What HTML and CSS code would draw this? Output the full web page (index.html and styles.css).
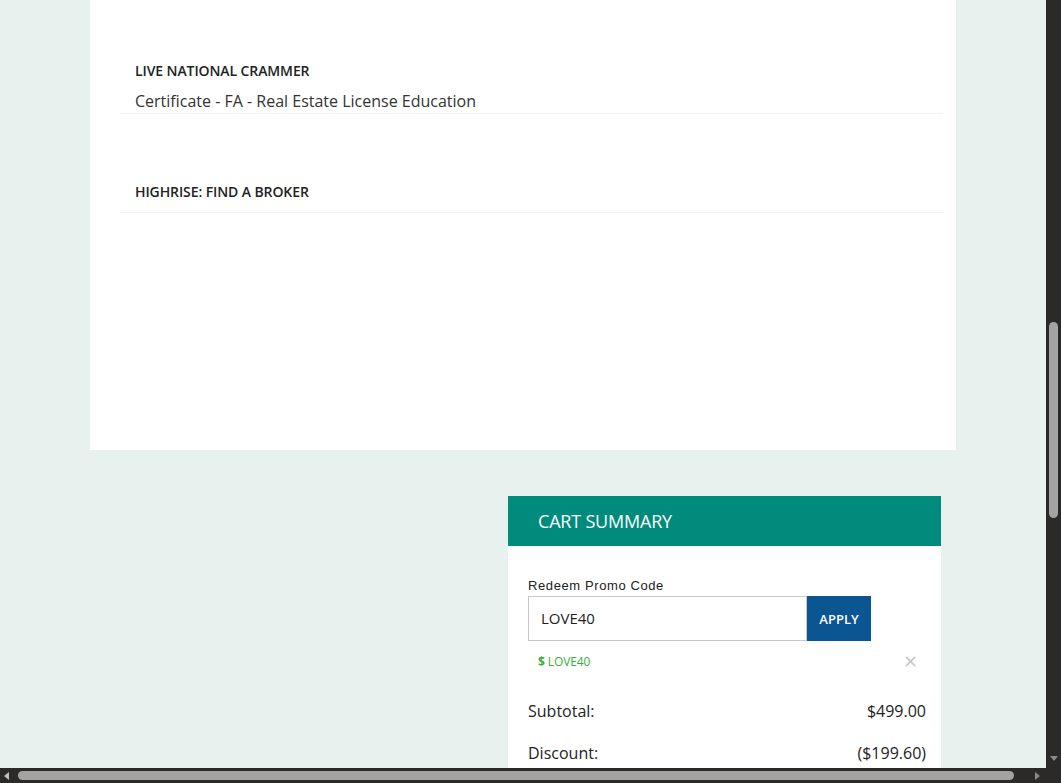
FILE: index.html
```html
<!DOCTYPE html>
<html>
<head>
<meta charset="utf-8">
<link rel="stylesheet" href="styles.css">
</head>
<body>
<div class="viewport">
  <div class="page">
    <section class="panel">
      <div class="item item-first">
        <div class="item-title">LIVE NATIONAL CRAMMER</div>
        <div class="item-sub">Certificate - FA - Real Estate License Education</div>
      </div>
      <div class="item item-second">
        <div class="item-title">HIGHRISE: FIND A BROKER</div>
      </div>
    </section>
    <div class="cart-row">
      <section class="cart">
        <div class="cart-head">CART SUMMARY</div>
        <div class="cart-body">
          <label class="promo-label">Redeem Promo Code</label>
          <div class="promo-row">
            <div class="promo-input">LOVE40</div>
            <button class="promo-btn">APPLY</button>
          </div>
          <div class="applied">
            <span class="applied-code">$ LOVE40</span>
            <span class="applied-x">×</span>
          </div>
          <div class="line line-first"><span>Subtotal:</span><span>$499.00</span></div>
          <div class="line"><span>Discount:</span><span>($199.60)</span></div>
        </div>
      </section>
    </div>
  </div>
  <div class="vscroll">
    <div class="vthumb"></div>
    <div class="varrow"></div>
  </div>
  <div class="hscroll">
    <div class="harrow-l"></div>
    <div class="hthumb"></div>
    <div class="harrow-r"></div>
  </div>
  <div class="corner"></div>
</div>
</body>
</html>
```
FILE: styles.css
```css
html, body {
  margin: 0;
  padding: 0;
  width: 1061px;
  height: 783px;
  overflow: hidden;
  background: #e7f1ed;
}
.viewport {
  width: 1061px;
  height: 783px;
  overflow: hidden;
  position: relative;
}
.page {
  width: 1046px;
  height: 768px;
  overflow: hidden;
  font-family: "Open Sans", "Noto Sans", sans-serif;
}
.panel {
  margin-left: 90px;
  width: 866px;
  height: 450px;
  background: #fff;
  padding: 0 13px 0 30px;
  box-sizing: border-box;
}
.item {
  border-bottom: 1px solid #f0f2f1;
  padding-left: 15px;
}
.item-first {
  padding-top: 62px;
  height: 51px;
}
.item-second {
  padding-top: 69px;
  height: 29px;
}
.item-title {
  font-size: 14px;
  font-weight: 600;
  color: #222;
  line-height: 18px;
  letter-spacing: -0.1px;
}
.item-sub {
  font-size: 16px;
  color: #333;
  line-height: 22px;
  margin-top: 10px;
}
.cart-row {
  display: flex;
  justify-content: flex-end;
  padding-right: 105px;
  padding-top: 46px;
}
.cart {
  width: 433px;
  background: #fff;
}
.cart-head {
  height: 50px;
  background: #008b7c;
  color: #fff;
  font-size: 18px;
  line-height: 50px;
  padding-left: 30px;
  letter-spacing: -0.2px;
}
.cart-body {
  padding: 31px 15px 20px 20px;
}
.promo-label {
  display: block;
  font-family: "Liberation Sans", Arial, sans-serif;
  font-size: 13px;
  color: #222;
  line-height: 18px;
  letter-spacing: 0.6px;
}
.promo-row {
  display: flex;
  margin-top: 1px;
}
.promo-input {
  width: 265px;
  height: 43px;
  border: 1px solid #c9c9c9;
  font-size: 15px;
  line-height: 43px;
  padding-left: 12px;
  color: #222;
}
.promo-btn {
  width: 64px;
  height: 45px;
  border: 0;
  background: #0a5592;
  color: #fff;
  font-family: "Open Sans", sans-serif;
  font-size: 13px;
  font-weight: 600;
  padding: 0;
}
.applied {
  display: flex;
  justify-content: space-between;
  align-items: center;
  padding: 10px 0 0 10px;
  width: 380px;
  height: 20px;
}
.applied-code {
  font-size: 12px;
  color: #3cad3c;
  letter-spacing: -0.1px;
}
.applied-code::first-letter {
  font-weight: 700;
}
.applied-x {
  font-size: 18px;
  color: #c5c5c5;
  font-family: "DejaVu Sans", sans-serif;
  line-height: 18px;
}
.line {
  display: flex;
  justify-content: space-between;
  font-size: 16px;
  color: #222;
  line-height: 22px;
  margin-top: 20px;
}
.line-first {
  margin-top: 29px;
}
.vscroll {
  position: absolute;
  right: 0;
  top: 0;
  width: 15px;
  height: 768px;
  background: #2b2a29;
}
.vthumb {
  position: absolute;
  left: 3px;
  top: 322px;
  width: 9px;
  height: 196px;
  background: #a3a3a3;
  border-radius: 5px;
}
.varrow {
  position: absolute;
  left: 4px;
  top: 756px;
  width: 0;
  height: 0;
  border-left: 4px solid transparent;
  border-right: 4px solid transparent;
  border-top: 5px solid #8a8a8a;
}
.hscroll {
  position: absolute;
  left: 0;
  bottom: 0;
  width: 1046px;
  height: 15px;
  background: #2b2a29;
}
.hthumb {
  position: absolute;
  left: 18px;
  top: 3px;
  width: 996px;
  height: 9px;
  background: #a3a3a3;
  border-radius: 5px;
}
.harrow-l {
  position: absolute;
  left: 4px;
  top: 4px;
  border-top: 4px solid transparent;
  border-bottom: 4px solid transparent;
  border-right: 5px solid #c0c0c0;
}
.harrow-r {
  position: absolute;
  left: 1035px;
  top: 4px;
  border-top: 4px solid transparent;
  border-bottom: 4px solid transparent;
  border-left: 5px solid #8a8a8a;
}
.corner {
  position: absolute;
  right: 0;
  bottom: 0;
  width: 15px;
  height: 15px;
  background: #2b2a29;
}
```
